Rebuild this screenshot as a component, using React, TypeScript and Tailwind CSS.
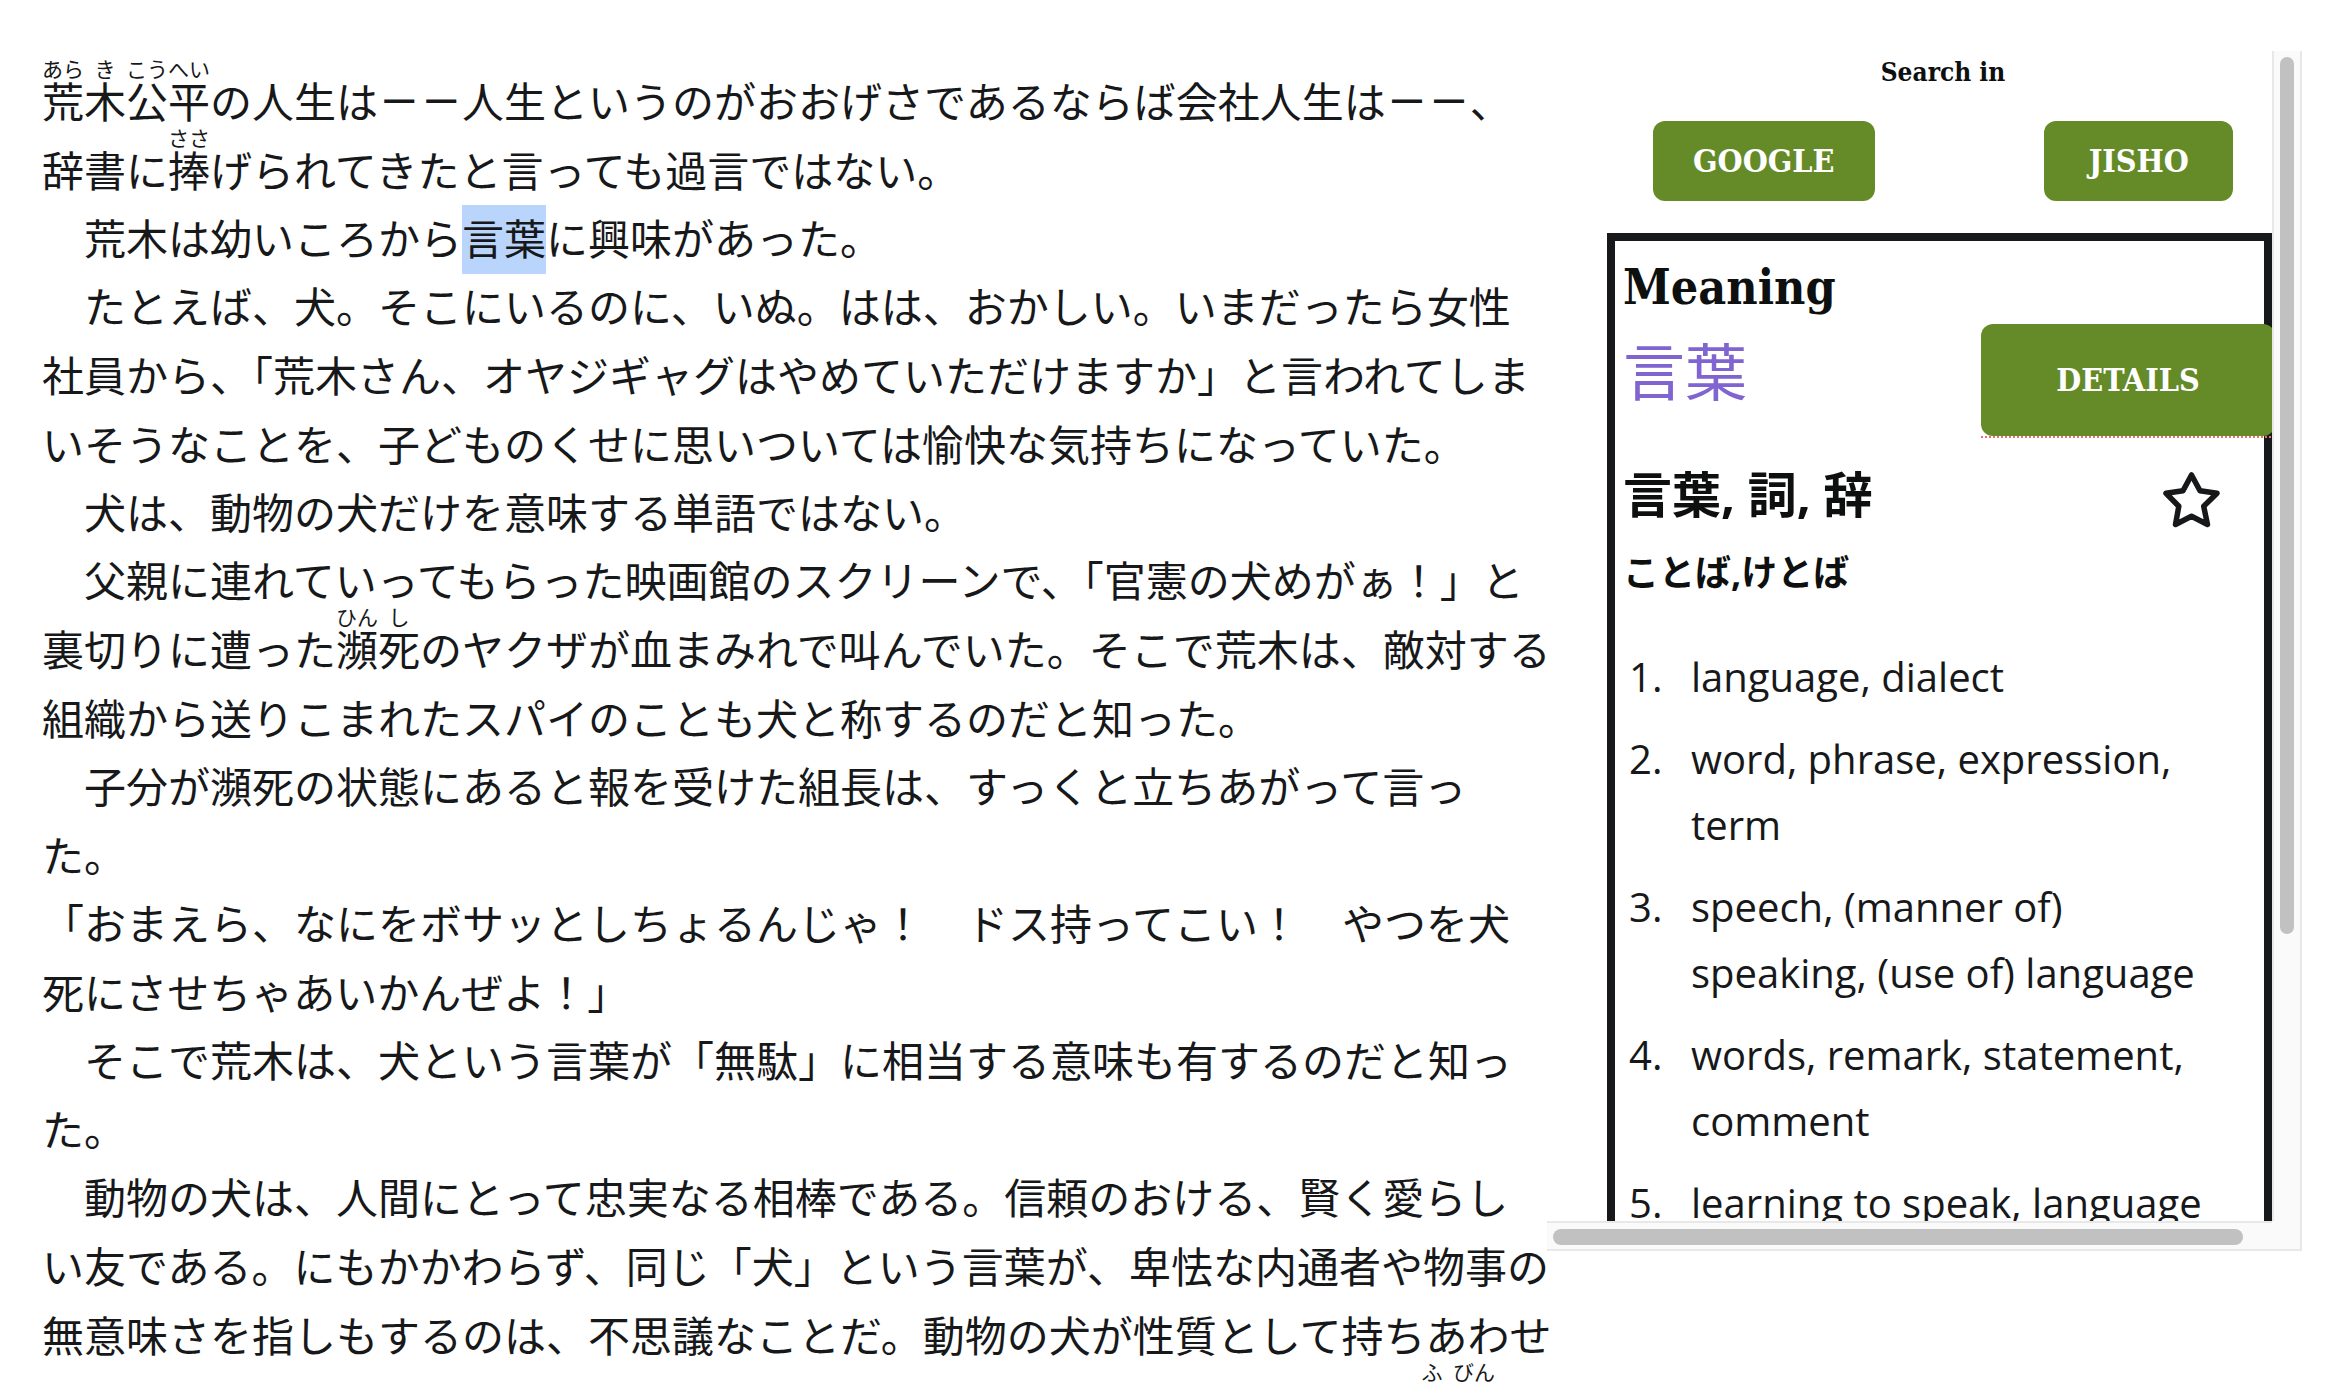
import type { ReactNode } from "react";

function Furigana({ base, reading }: { base: string; reading: string }) {
  return (
    <ruby className="relative inline-block">
      {base}
      <rt className="absolute top-[-7px] left-1/2 -translate-x-1/2 text-[21px] leading-[21px] whitespace-nowrap">
        {reading}
      </rt>
    </ruby>
  );
}

function Dash() {
  return (
    <span className="inline-grid w-[84px] grid-cols-2 text-center font-['Roboto',sans-serif] text-[46px] leading-none">
      <span>—</span>
      <span>—</span>
    </span>
  );
}

function Paragraph({ lines }: { lines: ReactNode[] }) {
  return (
    <p className="-mt-px whitespace-nowrap">
      {lines.map((line, i) => (
        <span key={i} className="block">
          {line}
        </span>
      ))}
    </p>
  );
}

const paragraphs: ReactNode[][] = [
  [
    <>
      <Furigana base="荒" reading="あら" />
      <Furigana base="木" reading="き" />
      <Furigana base="公平" reading="こうへい" />
      の人生は
      <Dash />
      人生というのがおおげさであるならば会社人生は
      <Dash />、
    </>,
    <>
      辞書に
      <Furigana base="捧" reading="ささ" />
      げられてきたと言っても過言ではない。
    </>,
  ],
  [
    <>
      {"　荒木は幼いころから"}
      <mark className="-mb-[6px] inline-block bg-[#bad5fb] pb-[6px] leading-[63px] text-inherit">言葉</mark>
      に興味があった。
    </>,
  ],
  [
    "　たとえば、犬。そこにいるのに、いぬ。はは、おかしい。いまだったら女性",
    "社員から、「荒木さん、オヤジギャグはやめていただけますか」と言われてしま",
    "いそうなことを、子どものくせに思いついては愉快な気持ちになっていた。",
  ],
  ["　犬は、動物の犬だけを意味する単語ではない。"],
  [
    "　父親に連れていってもらった映画館のスクリーンで、「官憲の犬めがぁ！」と",
    <>
      裏切りに遭った
      <Furigana base="瀕" reading="ひん" />
      <Furigana base="死" reading="し" />
      のヤクザが血まみれで叫んでいた。そこで荒木は、敵対する
    </>,
    "組織から送りこまれたスパイのことも犬と称するのだと知った。",
  ],
  ["　子分が瀕死の状態にあると報を受けた組長は、すっくと立ちあがって言っ", "た。"],
  [
    "「おまえら、なにをボサッとしちょるんじゃ！　ドス持ってこい！　やつを犬",
    "死にさせちゃあいかんぜよ！」",
  ],
  ["　そこで荒木は、犬という言葉が「無駄」に相当する意味も有するのだと知っ", "た。"],
  [
    "　動物の犬は、人間にとって忠実なる相棒である。信頼のおける、賢く愛らし",
    "い友である。にもかかわらず、同じ「犬」という言葉が、卑怯な内通者や物事の",
    "無意味さを指しもするのは、不思議なことだ。動物の犬が性質として持ちあわせ",
    <span className="flex justify-end pr-[52px]">
      <Furigana base="不" reading="ふ" />
      <Furigana base="憫" reading="びん" />
    </span>,
  ],
];

const meanings = [
  "language, dialect",
  "word, phrase, expression, term",
  "speech, (manner of) speaking, (use of) language",
  "words, remark, statement, comment",
  "learning to speak, language",
];

const slab = "font-['DejaVu_Serif_Condensed','DejaVu_Serif',serif] font-bold";
const greenButton = `${slab} rounded-[12px] bg-[#658b29] text-[32px] text-white`;

function DictionaryPanel() {
  return (
    <aside className="mt-[51px] mr-[42px] grid w-[755px] shrink-0 grid-cols-[1fr_30px] grid-rows-[1170px_30px] font-['Open_Sans','Noto_Sans_CJK_JP',sans-serif]">
      <div className="overflow-hidden pl-[60px]">
        <div className="-mr-[46px] -ml-[39px]">
          <h2 className={`${slab} pt-[3px] text-center text-[26px] leading-[36px] text-[#0e100f]`}>Search in</h2>
          <div className="mt-[31px] flex justify-around">
            <button className={`${greenButton} h-[80px] w-[222px]`}>GOOGLE</button>
            <button className={`${greenButton} h-[80px] w-[189px]`}>JISHO</button>
          </div>
        </div>
        <section className="mt-[32px] border-8 border-[#17181a] pl-[8px]">
          <h1 className={`${slab} pt-[11px] pb-[2px] text-[48px] leading-[70px] text-[#0e100f]`}>Meaning</h1>
          <div className="-mr-[11px] flex h-[114px] items-start justify-between">
            <span className="pt-[3px] text-[62px] leading-[90px] text-[#8064cf]">言葉</span>
            <span className="border-b-2 border-dotted border-[#e57373]">
              <button className={`${greenButton} block h-[112px] w-[294px]`}>DETAILS</button>
            </span>
          </div>
          <div className="flex items-center justify-between pt-[22px] pr-[43px]">
            <h3 className="text-[49px] leading-[68px] font-bold text-[#0e100f]">言葉, 詞, 辞</h3>
            <button aria-label="Save word">
              <svg viewBox="0 0 58 56" className="mt-[12px] h-[56px] w-[58px]" fill="none" stroke="#17181a" strokeWidth="5.5" strokeLinejoin="round">
                <path d="M28.5 3 L37 18.700 L54 21.300 L40.700 34.300 L44.500 52.500 L28.500 44.300 L12.500 52.500 L15.800 34.300 L3 21.300 L20 18.700 Z" />
              </svg>
            </button>
          </div>
          <h4 className="mt-[20px] text-[36px] leading-[50px] font-bold text-[#0e100f]">ことば,けとば</h4>
          <ol className="mt-[46px] space-y-[16px] pr-[40px] text-[40px] leading-[66px]">
            {meanings.map((m, i) => (
              <li key={m} className="flex pl-[6px]">
                <span className="w-[62px] shrink-0">{i + 1}.</span>
                <span>{m}</span>
              </li>
            ))}
          </ol>
        </section>
      </div>
      <div className="border-x-2 border-[#e8e8e8] bg-[#fafafa] px-[6px] pt-[6px]">
        <div className="h-[877px] rounded-full bg-[#c1c1c1]" />
      </div>
      <div className="border-y-2 border-[#e8e8e8] bg-[#fafafa] px-[6px] py-[6px]">
        <div className="mr-[23px] h-[16px] rounded-full bg-[#c1c1c1]" />
      </div>
      <div className="border-r-2 border-b-2 border-[#e8e8e8] bg-[#fafafa]" />
    </aside>
  );
}

export default function App() {
  return (
    <main className="flex h-screen items-start justify-between overflow-hidden bg-white text-[#17181a]">
      <article lang="ja" className="w-0 grow pt-[66px] pl-[42px] font-['Noto_Sans_CJK_JP',sans-serif] text-[42px] leading-[69px]">
        {paragraphs.map((lines, i) => (
          <Paragraph key={i} lines={lines} />
        ))}
      </article>
      <DictionaryPanel />
    </main>
  );
}
